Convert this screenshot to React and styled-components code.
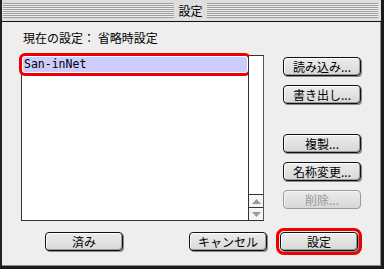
import styled, { createGlobalStyle } from "styled-components";

const GlobalStyle = createGlobalStyle`
  html, body {
    margin: 0;
    padding: 0;
    background: #ffffff;
  }
  * {
    box-sizing: border-box;
  }
`;

const FONT = `"Noto Sans CJK JP", "Liberation Sans", sans-serif`;

export default function App() {
  return (
    <>
      <GlobalStyle />
      <SCWindow>
        <SCTitleBar>
          <SCStripes>
            <SCTitle>設定</SCTitle>
          </SCStripes>
        </SCTitleBar>

        <SCBody>
          <SCLabel>現在の設定： 省略時設定</SCLabel>

          <SCMain>
            <SCListBox>
              <SCListArea>
                <SCRow $selected>San-inNet</SCRow>
              </SCListArea>
              <SCScrollBar>
                <SCTrack />
                <SCArrow>
                  <svg width="9" height="5" viewBox="0 0 9 5">
                    <path d="M0 5 L4.5 0 L9 5 Z" fill="#9a9a9a" />
                  </svg>
                </SCArrow>
                <SCArrow>
                  <svg width="9" height="5" viewBox="0 0 9 5">
                    <path d="M0 0 L4.5 5 L9 0 Z" fill="#9a9a9a" />
                  </svg>
                </SCArrow>
              </SCScrollBar>
            </SCListBox>

            <SCSideButtons>
              <SCButton>読み込み...</SCButton>
              <SCButton>書き出し...</SCButton>
              <SCSpacer />
              <SCButton>複製...</SCButton>
              <SCButton>名称変更...</SCButton>
              <SCButton disabled>削除...</SCButton>
            </SCSideButtons>
          </SCMain>

          <SCFooter>
            <SCButton>済み</SCButton>
            <SCFooterRight>
              <SCButton>キャンセル</SCButton>
              <SCButton $marked>設定</SCButton>
            </SCFooterRight>
          </SCFooter>
        </SCBody>
      </SCWindow>
    </>
  );
}

const SCWindow = styled.div`
  width: 384px;
  height: 269px;
  display: flex;
  flex-direction: column;
  background: #eeeeee;
  border-left: 2px solid #222222;
  border-right: 3px solid #1a1a1a;
  border-bottom: 3px solid #1a1a1a;
  box-shadow: inset -1px -1px 0 #8a8a8a;
  font-family: ${FONT};
  font-size: 12px;
  color: #000000;
`;

const SCTitleBar = styled.div`
  height: 22px;
  flex-shrink: 0;
  padding: 3px 3px 3px 1px;
  background: #dedede;
  border-bottom: 1px solid #111111;
`;

const SCStripes = styled.div`
  height: 100%;
  display: flex;
  justify-content: center;
  align-items: center;
  background: repeating-linear-gradient(
    to bottom,
    #9c9c9c 0px,
    #9c9c9c 1px,
    #eeeeee 1px,
    #eeeeee 2px
  );
`;

const SCTitle = styled.div`
  height: 100%;
  padding: 0 4px;
  background: #dedede;
  line-height: 15px;
  font-size: 12px;
`;

const SCBody = styled.div`
  flex: 1;
  display: flex;
  flex-direction: column;
  padding: 9px 0 0 19px;
`;

const SCLabel = styled.div`
  height: 14px;
  line-height: 14px;
  padding-left: 2px;
  font-size: 12px;
`;

const SCMain = styled.div`
  display: flex;
  gap: 19px;
  margin-top: 10px;
`;

const SCListBox = styled.div`
  width: 243px;
  height: 166px;
  display: flex;
  background: #ffffff;
  border: 1px solid #333333;
  border-right-color: #555555;
`;

const SCListArea = styled.div`
  flex: 1;
  padding: 1px 1px 0 1px;
`;

const SCRow = styled.div`
  height: 15px;
  line-height: 15px;
  padding-left: 1px;
  font-family: "DejaVu Sans Mono", "Liberation Mono", monospace;
  font-size: 11.5px;
  background: ${(p) => (p.$selected ? "#ccccff" : "transparent")};
  border-radius: 2px;
  outline: ${(p) => (p.$selected ? "3px solid #ee0000" : "none")};
  outline-offset: 1px;
`;

const SCScrollBar = styled.div`
  width: 15px;
  display: flex;
  flex-direction: column;
  border-left: 1px solid #333333;
  background: #ffffff;
`;

const SCTrack = styled.div`
  flex: 1;
`;

const SCArrow = styled.div`
  height: 13px;
  display: flex;
  align-items: center;
  justify-content: center;
  border-top: 1px solid #333333;
  background: #f4f4f4;
`;

const SCSideButtons = styled.div`
  display: flex;
  flex-direction: column;
  gap: 9px;
  padding-top: 2px;
`;

const SCSpacer = styled.div`
  height: 12px;
`;

const SCButton = styled.button`
  width: 78px;
  height: 19px;
  padding: 0;
  font-family: ${FONT};
  font-size: 12px;
  line-height: 16px;
  color: ${(p) => (p.disabled ? "#9a9a9a" : "#000000")};
  background: linear-gradient(to bottom, #ececec, #d8d8d8);
  border: 1px solid ${(p) => (p.disabled ? "#9a9a9a" : "#111111")};
  border-radius: 4px;
  box-shadow: ${(p) =>
    p.disabled
      ? "inset 1px 1px 0 #f6f6f6"
      : "inset 1px 1px 0 #ffffff, inset -1px -1px 0 #9a9a9a, 1px 1px 0 #8a8a8a"};
  outline: ${(p) => (p.$marked ? "3px solid #ee0000" : "none")};
  outline-offset: 1px;
`;

const SCFooter = styled.div`
  display: flex;
  justify-content: space-between;
  align-items: center;
  margin-top: 11px;
  padding-left: 24px;
  padding-right: 23px;
`;

const SCFooterRight = styled.div`
  display: flex;
  gap: 13px;
`;
